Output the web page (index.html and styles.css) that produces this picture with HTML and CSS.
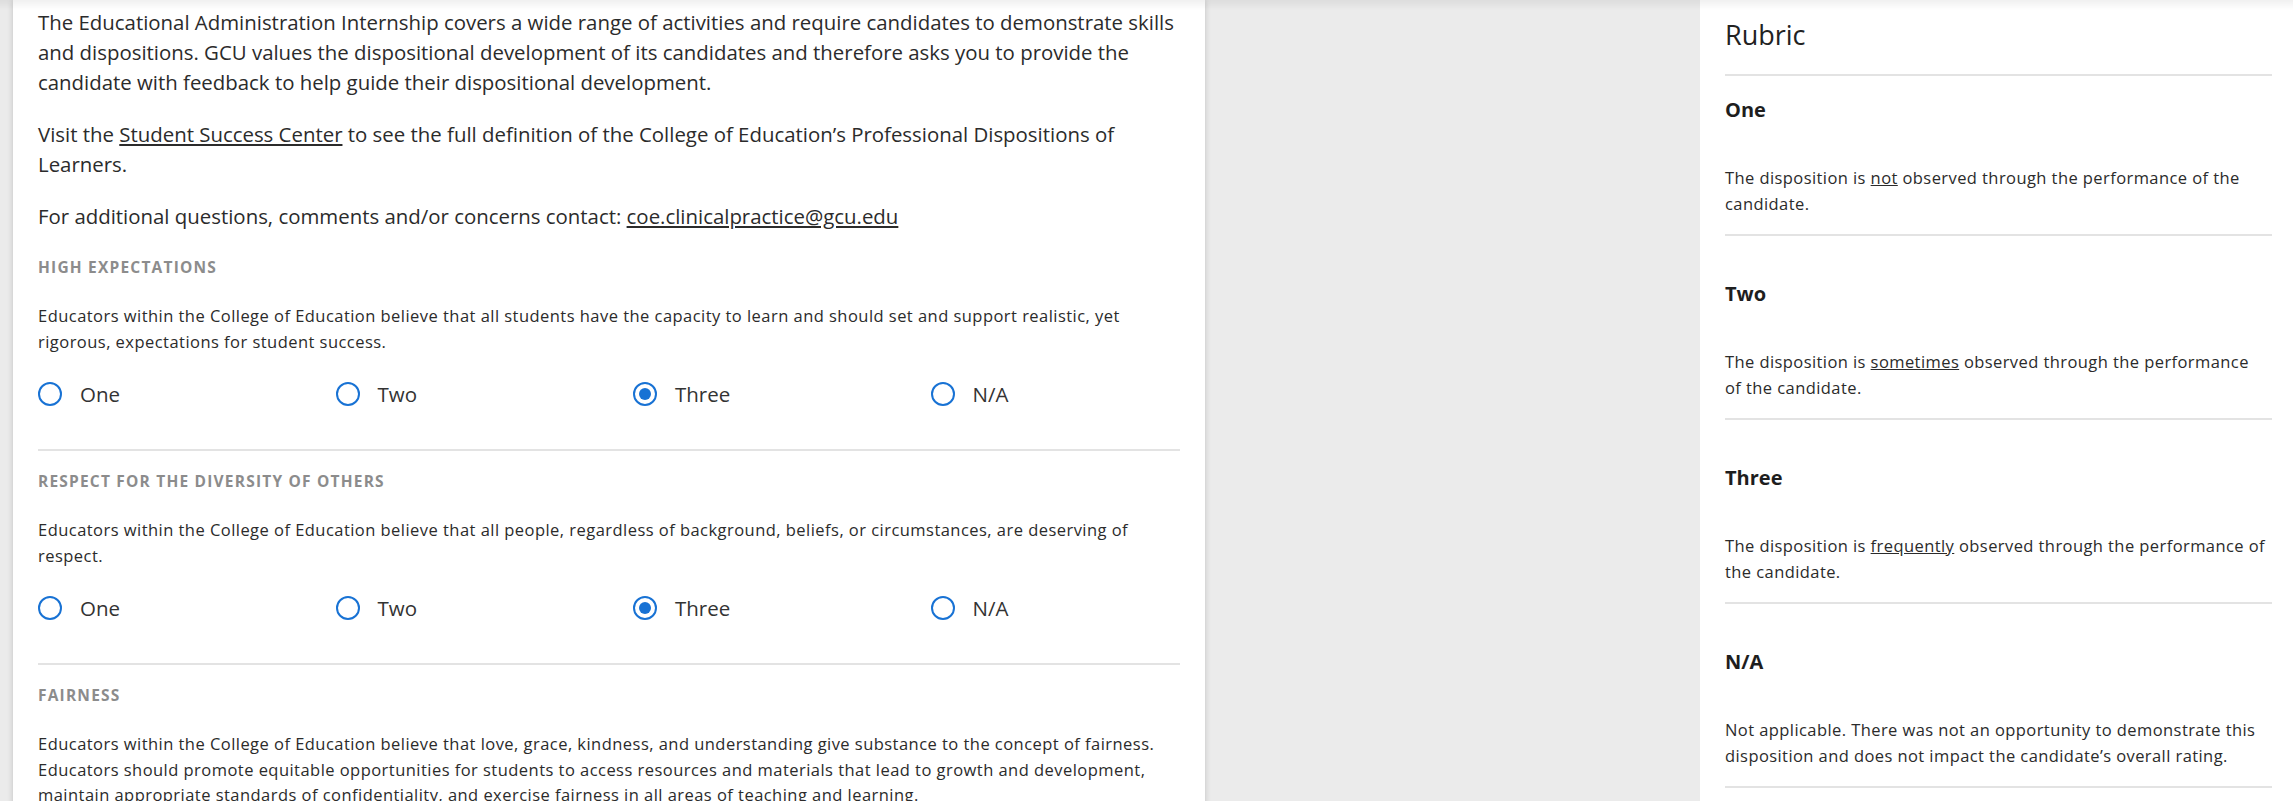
FILE: index.html
```html
<!DOCTYPE html>
<html>
<head>
  <link rel="stylesheet" href="styles.css">
</head>
<body>

  <div class="page">
    <!-- Evaluation form -->
    <main class="card">
      <div class="intro">
        <p>The Educational Administration Internship covers a wide range of activities and require candidates to demonstrate skills and dispositions. GCU values the dispositional development of its candidates and therefore asks you to provide the candidate with feedback to help guide their dispositional development.</p>
        <p>Visit the <a href="#">Student Success Center</a> to see the full definition of the College of Education’s Professional Dispositions of Learners.</p>
        <p>For additional questions, comments and/or concerns contact: <a href="#">coe.clinicalpractice@gcu.edu</a></p>
      </div>

      <section class="disposition">
        <h3 class="disp-title">High Expectations</h3>
        <p class="disp-desc">Educators within the College of Education believe that all students have the capacity to learn and should set and support realistic, yet rigorous, expectations for student success.</p>
        <div class="options">
          <label class="option"><span class="radio"></span>One</label>
          <label class="option"><span class="radio"></span>Two</label>
          <label class="option"><span class="radio checked"></span>Three</label>
          <label class="option"><span class="radio"></span>N/A</label>
        </div>
      </section>

      <section class="disposition">
        <h3 class="disp-title">Respect for the Diversity of Others</h3>
        <p class="disp-desc">Educators within the College of Education believe that all people, regardless of background, beliefs, or circumstances, are deserving of respect.</p>
        <div class="options">
          <label class="option"><span class="radio"></span>One</label>
          <label class="option"><span class="radio"></span>Two</label>
          <label class="option"><span class="radio checked"></span>Three</label>
          <label class="option"><span class="radio"></span>N/A</label>
        </div>
      </section>

      <section class="disposition">
        <h3 class="disp-title">Fairness</h3>
        <p class="disp-desc">Educators within the College of Education believe that love, grace, kindness, and understanding give substance to the concept of fairness. Educators should promote equitable opportunities for students to access resources and materials that lead to growth and development, maintain appropriate standards of confidentiality, and exercise fairness in all areas of teaching and learning.</p>
        <div class="options">
          <label class="option"><span class="radio"></span>One</label>
          <label class="option"><span class="radio"></span>Two</label>
          <label class="option"><span class="radio"></span>Three</label>
          <label class="option"><span class="radio"></span>N/A</label>
        </div>
      </section>
    </main>

    <div class="spacer"></div>

    <!-- Rubric side panel -->
    <aside class="rubric">
      <h2 class="rubric-title">Rubric</h2>
      <div class="rubric-item first">
        <h4>One</h4>
        <p>The disposition is <u>not</u> observed through the performance of the candidate.</p>
      </div>
      <div class="rubric-item">
        <h4>Two</h4>
        <p>The disposition is <u>sometimes</u> observed through the performance of the candidate.</p>
      </div>
      <div class="rubric-item">
        <h4>Three</h4>
        <p>The disposition is <u>frequently</u> observed through the performance of the candidate.</p>
      </div>
      <div class="rubric-item">
        <h4>N/A</h4>
        <p>Not applicable. There was not an opportunity to demonstrate this disposition and does not impact the candidate’s overall rating.</p>
      </div>
    </aside>
  </div>

</body>
</html>
```

FILE: styles.css
```css
body {
  margin: 0;
  background: #ebebeb;
  font-family: "Open Sans", "Noto Sans", sans-serif;
  color: #2b2b2b;
  overflow: hidden;
}

body::before {
  content: "";
  position: fixed;
  top: 0;
  left: 0;
  right: 0;
  height: 10px;
  background: linear-gradient(rgba(0, 0, 0, 0.06), rgba(0, 0, 0, 0));
  z-index: 5;
}

.page {
  display: flex;
  align-items: flex-start;
  padding-left: 13px;
}

.card {
  width: 1192px;
  box-sizing: border-box;
  padding: 7px 25px 40px 25px;
  background: #fff;
  box-shadow: 0 0 6px rgba(0, 0, 0, 0.18);
  flex-shrink: 0;
}

.spacer {
  flex: 1;
}

a {
  color: inherit;
  text-decoration: underline;
}

.intro p {
  margin: 0 0 22px 0;
  font-size: 20.4px;
  line-height: 30px;
}

.intro p:last-child {
  margin-bottom: 6px;
}

.disposition {
  padding: 20px 0 43px 0;
  border-bottom: 2px solid #e3e3e3;
}

.disp-title {
  margin: 0 0 26px 0;
  font-size: 15.5px;
  line-height: 20px;
  letter-spacing: 1.2px;
  font-weight: 700;
  text-transform: uppercase;
  color: #8c8c8c;
}

.disp-desc {
  margin: 0 0 28px 0;
  font-size: 16.5px;
  letter-spacing: 0.46px;
  line-height: 25.5px;
}

.options {
  display: grid;
  grid-template-columns: repeat(4, 297.5px);
}

.option {
  display: flex;
  align-items: center;
  gap: 18px;
  font-size: 20.5px;
  line-height: 24px;
  color: #333;
}

.radio {
  width: 24px;
  height: 24px;
  box-sizing: border-box;
  border: 2.5px solid #1872d4;
  border-radius: 50%;
  display: flex;
  align-items: center;
  justify-content: center;
}

.radio.checked::after {
  content: "";
  width: 12px;
  height: 12px;
  border-radius: 50%;
  background: #1872d4;
}

.rubric {
  width: 593px;
  box-sizing: border-box;
  padding: 19px 21px 40px 25px;
  background: #fff;
  flex-shrink: 0;
  min-height: 801px;
}

.rubric-title {
  margin: 0;
  padding-bottom: 23px;
  border-bottom: 2px solid #e3e3e3;
  font-size: 27px;
  line-height: 32px;
  font-weight: 400;
  color: #222;
}

.rubric-item {
  padding: 46px 0 17px 0;
  border-bottom: 2px solid #e3e3e3;
}

.rubric-item.first {
  padding-top: 22px;
}

.rubric-item h4 {
  margin: 0 0 43px 0;
  font-size: 20px;
  line-height: 24px;
  font-weight: 700;
  color: #1e1e1e;
}

.rubric-item p {
  margin: 0;
  padding-right: 4px;
  font-size: 16.5px;
  letter-spacing: 0.42px;
  line-height: 26px;
}
```
